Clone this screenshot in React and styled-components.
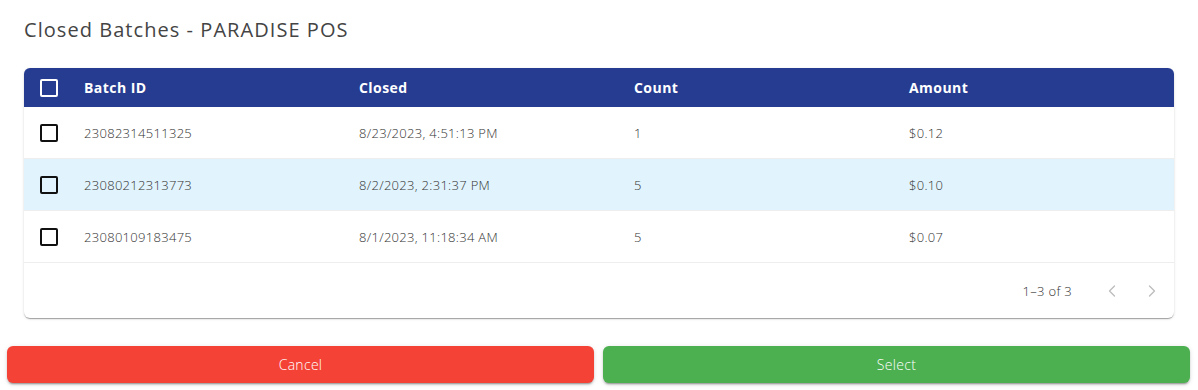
import React from "react";
import styled, { createGlobalStyle } from "styled-components";
import { ChevronLeft, ChevronRight } from "lucide-react";

const Global = createGlobalStyle`
  html, body { margin: 0; padding: 0; background: #fff; }
  body { font-family: "Open Sans", "Liberation Sans", sans-serif; color: #444; }
  * { box-sizing: border-box; }
`;

const Page = styled.div`
  width: 1198px;
  height: 390px;
  background: #fff;
  display: flex;
  flex-direction: column;
`;

const Title = styled.h2`
  margin: 0;
  padding: 14px 24px 0;
  font-size: 20px;
  font-weight: 400;
  line-height: 32px;
  letter-spacing: 1.05px;
  color: #444;
`;

const Content = styled.div`
  padding: 22px 24px 0;
`;

const Paper = styled.div`
  border-radius: 6px;
  overflow: hidden;
  background: #fff;
  box-shadow: 0 2px 1px -1px rgba(0,0,0,0.2), 0 1px 1px 0 rgba(0,0,0,0.14), 0 1px 3px 0 rgba(0,0,0,0.12);
`;

const Row = styled.div`
  display: grid;
  grid-template-columns: 44px 275px 275px 275px 1fr;
  align-items: center;
  height: ${(p) => (p.$head ? "39px" : "52px")};
  background: ${(p) => (p.$head ? "#253c91" : p.$hl ? "#e1f3fc" : "#fff")};
  border-bottom: ${(p) => (p.$head ? "none" : "1px solid #eeeeee")};
`;

const Cell = styled.div`
  padding-left: 16px;
  font-size: ${(p) => (p.$head ? "14px" : "13px")};
  font-weight: ${(p) => (p.$head ? 700 : 300)};
  letter-spacing: ${(p) => (p.$head ? "0.45px" : "0.3px")};
  color: ${(p) => (p.$head ? "#fff" : "#333")};
  white-space: nowrap;
`;

const CheckCell = styled.div`
  display: flex;
  align-items: center;
  padding-left: 16px;
`;

const Box = styled.span`
  width: 18px;
  height: 18px;
  border: 2px solid ${(p) => (p.$light ? "#fff" : "#111")};
  border-radius: 2px;
  display: block;
`;

const Footer = styled.div`
  height: 55px;
  display: flex;
  align-items: center;
  justify-content: flex-end;
  padding-right: 2px;
`;

const Count = styled.span`
  font-size: 13px;
  font-weight: 300;
  letter-spacing: 0.3px;
  color: #333;
`;

const Actions = styled.div`
  display: flex;
  margin-left: 20px;
`;

const IconBtn = styled.span`
  width: 40px;
  height: 40px;
  display: flex;
  align-items: center;
  justify-content: center;
  color: #bdbdbd;
`;

const Buttons = styled.div`
  display: flex;
  gap: 9px;
  padding: 28px 8px 0 7px;
`;

const Btn = styled.button`
  flex: 1;
  height: 37px;
  border: none;
  border-radius: 6px;
  background: ${(p) => p.$bg};
  color: #fff;
  font-family: inherit;
  font-size: 14px;
  font-weight: 300;
  letter-spacing: 0.3px;
  box-shadow: 0 3px 1px -2px rgba(0,0,0,0.2), 0 2px 2px 0 rgba(0,0,0,0.14), 0 1px 5px 0 rgba(0,0,0,0.12);
`;

const rows = [
  ["23082314511325", "8/23/2023, 4:51:13 PM", "1", "$0.12"],
  ["23080212313773", "8/2/2023, 2:31:37 PM", "5", "$0.10"],
  ["23080109183475", "8/1/2023, 11:18:34 AM", "5", "$0.07"],
];

export default function App() {
  return (
    <Page>
      <Global />
      <Title>Closed Batches - PARADISE POS</Title>
      <Content>
        <Paper>
          <Row $head>
            <CheckCell><Box $light /></CheckCell>
            <Cell $head>Batch ID</Cell>
            <Cell $head>Closed</Cell>
            <Cell $head>Count</Cell>
            <Cell $head>Amount</Cell>
          </Row>
          {rows.map((r, i) => (
            <Row key={r[0]} $hl={i === 1}>
              <CheckCell><Box /></CheckCell>
              {r.map((c) => (
                <Cell key={c}>{c}</Cell>
              ))}
            </Row>
          ))}
          <Footer>
            <Count>1–3 of 3</Count>
            <Actions>
              <IconBtn><ChevronLeft size={20} strokeWidth={1.6} /></IconBtn>
              <IconBtn><ChevronRight size={20} strokeWidth={1.6} /></IconBtn>
            </Actions>
          </Footer>
        </Paper>
      </Content>
      <Buttons>
        <Btn $bg="#f44336">Cancel</Btn>
        <Btn $bg="#4caf50">Select</Btn>
      </Buttons>
    </Page>
  );
}
